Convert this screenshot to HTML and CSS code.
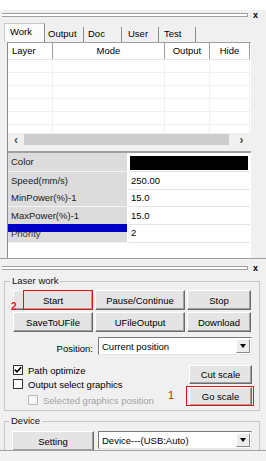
FILE: index.html
```html
<!DOCTYPE html>
<html lang="en">
  <head>
    <meta charset="UTF-8" />
    <meta name="viewport" content="width=device-width, initial-scale=1.0" />
    <title>Laser work panel</title>
    <link rel="stylesheet" href="styles.css">
  </head>
  <body>
    <div class="app">
      <div class="toppad"></div>
      <div class="grip">
        <span class="grip-lines"></span>
        <span class="grip-close">x</span>
      </div>

      <div class="tabs">
        <div class="tab tab-work active">Work</div>
        <div class="tab tab-output">Output</div>
        <div class="tab tab-doc">Doc</div>
        <div class="tab tab-user">User</div>
        <div class="tab tab-test">Test</div>
      </div>

      <div class="page">
        <div class="list-head">
          <div class="hcell hcell-left">Layer</div>
          <div class="hcell">Mode</div>
          <div class="hcell">Output</div>
          <div class="hcell">Hide</div>
        </div>
        <div class="list-body">
          <div class="lrow"><span></span><span></span><span></span><span></span></div>
          <div class="lrow"><span></span><span></span><span></span><span></span></div>
          <div class="lrow"><span></span><span></span><span></span><span></span></div>
          <div class="lrow"><span></span><span></span><span></span><span></span></div>
          <div class="lrow"><span></span><span></span><span></span><span></span></div>
          <div class="lrow"><span></span><span></span><span></span><span></span></div>
        </div>
        <div class="hscroll">
          <span class="sarrow">&lsaquo;</span>
          <span class="thumb"></span>
          <span class="sarrow sarrow-right">&rsaquo;</span>
        </div>

        <div class="gap"></div>

        <div class="props">
          <div class="prop">
            <div class="pname">Color</div>
            <div class="psep"></div>
            <div class="pval"><span class="swatch"></span></div>
          </div>
          <div class="prop">
            <div class="pname">Speed(mm/s)</div>
            <div class="psep"></div>
            <div class="pval">250.00</div>
          </div>
          <div class="prop">
            <div class="pname">MinPower(%)-1</div>
            <div class="psep"></div>
            <div class="pval">15.0</div>
          </div>
          <div class="prop">
            <div class="pname">MaxPower(%)-1</div>
            <div class="psep"></div>
            <div class="pval">15.0</div>
          </div>
          <div class="prop">
            <div class="pname pname-sel">Priority</div>
            <div class="psep"></div>
            <div class="pval">2</div>
          </div>
        </div>
      </div>

      <div class="divider"></div>

      <div class="grip grip-low">
        <span class="grip-lines"></span>
        <span class="grip-close">x</span>
      </div>

      <fieldset class="group laser">
        <legend>Laser work</legend>
        <div class="btn-grid">
          <button class="btn">Start</button>
          <button class="btn">Pause/Continue</button>
          <button class="btn">Stop</button>
          <button class="btn">SaveToUFile</button>
          <button class="btn">UFileOutput</button>
          <button class="btn">Download</button>
        </div>

        <div class="pos-row">
          <span class="pos-label">Position:</span>
          <div class="select">
            <span class="select-text">Current position</span>
            <span class="select-arrow"><i></i></span>
          </div>
        </div>

        <div class="lower">
          <div class="checks">
            <label class="check">
              <span class="box">
                <svg width="8" height="8" viewBox="0 0 8 8"><polyline points="0.8,3.6 3,5.9 7.2,1.2" fill="none" stroke="#000" stroke-width="1.6"/></svg>
              </span>
              Path optimize
            </label>
            <label class="check">
              <span class="box"></span>
              Output select graphics
            </label>
            <label class="check check-off">
              <span class="box"></span>
              Selected graphics position
            </label>
          </div>
          <div class="scale-btns">
            <button class="btn">Cut scale</button>
            <button class="btn">Go scale</button>
          </div>
        </div>
      </fieldset>

      <fieldset class="group device">
        <legend>Device</legend>
        <div class="dev-row">
          <button class="btn btn-setting">Setting</button>
          <div class="select">
            <span class="select-text">Device---(USB:Auto)</span>
            <span class="select-arrow"><i></i></span>
          </div>
        </div>
      </fieldset>

      <div class="statusbar"></div>

      <!-- red annotation marks drawn over the panel -->
      <span class="mark mark-start"></span>
      <span class="mark-num mark-num-2">2</span>
      <span class="mark mark-go"></span>
      <span class="mark-num mark-num-1">1</span>
    </div>
  </body>
</html>
```

FILE: styles.css
```css
body {
  margin: 0;
  background: #f0f0f0;
  font-family: "Liberation Sans", Arial, sans-serif;
  font-size: 9.5px;
  color: #000;
}
.app {
  position: relative;
  width: 266px;
  height: 461px;
  overflow: hidden;
  background: #f0f0f0;
}
.toppad {
  height: 10px;
  background: #fff;
}
.grip {
  display: flex;
  align-items: flex-start;
  height: 13px;
  padding-left: 2px;
}
.grip-lines {
  margin-top: 3px;
  width: 245px;
  height: 2px;
  border: 1px solid #a0a0a0;
  border-left: none;
  background: #fff;
}
.grip-close {
  margin-left: 5px;
  margin-top: 1px;
  font-weight: bold;
  font-size: 9px;
  line-height: 9px;
}
.grip-low {
  height: 16px;
}
.grip-low .grip-lines {
  margin-top: 7px;
}
.grip-low .grip-close {
  margin-top: 5px;
}

/* tabs */
.tabs {
  display: flex;
  align-items: flex-end;
  height: 19px;
  padding-left: 4px;
}
.tab {
  box-sizing: border-box;
  height: 15px;
  line-height: 14px;
  padding-left: 3px;
  border-right: 1px solid #8c8c8c;
}
.tab-work {
  width: 41px;
}
.tab-output {
  width: 39px;
}
.tab-doc {
  width: 38px;
  padding-left: 4px;
}
.tab-user {
  width: 37px;
  padding-left: 6px;
}
.tab-test {
  width: 37px;
  padding-left: 5px;
}
.tab.active {
  height: 19px;
  line-height: 16px;
  padding-left: 5px;
  background: #fbfbfb;
  border: 1px solid #c8c8c8;
  border-right-color: #8c8c8c;
  border-bottom: none;
}

/* tab page */
.page {
  width: 243px;
  margin-left: 7px;
  border-top: 1px solid #a0a0a0;
  border-left: 1px solid #8c8c8c;
}
.list-head {
  display: grid;
  grid-template-columns: 45px 112px 45px 40px;
  height: 17px;
  box-sizing: border-box;
  background: #fff;
  border-bottom: 1px solid #e6e6e6;
}
.hcell {
  box-sizing: border-box;
  line-height: 16px;
  text-align: center;
  border-right: 1px solid #a0a0a0;
}
.hcell-left {
  text-align: left;
  padding-left: 4px;
}
.list-body {
  height: 73px;
  overflow: hidden;
  background: #fff;
}
.lrow {
  display: grid;
  grid-template-columns: 45px 112px 45px 40px;
  height: 13px;
  box-sizing: border-box;
  border-bottom: 1px solid #f0f0f0;
}
.lrow span {
  border-right: 1px solid #f0f0f0;
}
.hscroll {
  display: flex;
  align-items: center;
  height: 13px;
  background: #f0f0f0;
}
.sarrow {
  width: 16px;
  text-align: center;
  font-weight: bold;
  font-size: 12px;
  line-height: 12px;
  color: #505050;
}
.sarrow-right {
  margin-left: auto;
  width: 19px;
}
.thumb {
  width: 205px;
  height: 11px;
  background: #cdcdcd;
}
.gap {
  height: 5px;
}

/* property grid */
.props {
  height: 105px;
  border-top: 2px solid #a0a0a0;
  background: #fff;
}
.prop {
  display: grid;
  grid-template-columns: 119px 2px 121px;
  height: 18px;
}
.prop:nth-child(2),
.prop:nth-child(4) {
  height: 17px;
}
.prop:first-child {
  height: 19px;
}
.pname,
.pval {
  box-sizing: border-box;
  line-height: 17px;
  border-bottom: 1px solid #f4f4f4;
}
.pname {
  padding-left: 3px;
  background: #dcdcdc;
  color: #1a1a1a;
}
.pname-sel {
  padding-top: 1px;
  background: linear-gradient(#0000c8 0 8px, #dcdcdc 8px);
  color: #333;
}
.pval {
  padding-left: 2px;
  border-bottom-color: #e4e4e4;
}
.swatch {
  display: block;
  width: 118px;
  height: 14px;
  margin: 3px 0 0 -1px;
  background: #000;
}
.divider {
  border-top: 1px solid #a0a0a0;
}

/* group boxes */
.group {
  box-sizing: border-box;
  width: 256px;
  margin: 0 0 0 4px;
  border: 1px solid #c6c6c6;
  padding: 3px 7px 3px 8px;
}
.group legend {
  margin-left: -3px;
  padding: 0 2px;
  line-height: 12px;
  color: #111;
}
.btn {
  box-sizing: border-box;
  height: 20px;
  padding: 0;
  font-family: inherit;
  font-size: 9.5px;
  color: #000;
  background: #e4e4e4;
  border: 1px solid;
  border-color: #fff #6a6a6a #6a6a6a #fff;
  box-shadow: inset -1px -1px 0 #a0a0a0;
}
.btn-grid {
  display: grid;
  grid-template-columns: 80px 90px 64px;
  column-gap: 2px;
  row-gap: 2px;
}
.pos-row {
  display: flex;
  align-items: center;
  margin-top: 5px;
}
.pos-label {
  width: 80px;
  text-align: right;
  margin-right: 5px;
  padding-top: 4px;
}
.select {
  box-sizing: border-box;
  display: flex;
  align-items: center;
  width: 154px;
  height: 18px;
  background: #fff;
  border: 1px solid;
  border-color: #7a7a7a #e6e6e6 #e6e6e6 #7a7a7a;
}
.select-text {
  flex: 1;
  padding-left: 3px;
}
.select-arrow {
  box-sizing: border-box;
  display: flex;
  align-items: center;
  justify-content: center;
  width: 14px;
  height: 14px;
  margin-right: 1px;
  background: #ececec;
  border: 1px solid;
  border-color: #fff #8a8a8a #8a8a8a #fff;
}
.select-arrow i {
  width: 0;
  height: 0;
  border-left: 3px solid transparent;
  border-right: 3px solid transparent;
  border-top: 4px solid #000;
}
.lower {
  display: flex;
  justify-content: space-between;
  margin-top: 8px;
}
.check {
  display: flex;
  align-items: center;
  height: 14px;
}
.check + .check-off {
  margin-top: 2px;
  padding-left: 15px;
  color: #a3a3a3;
}
.box {
  box-sizing: border-box;
  display: flex;
  align-items: center;
  justify-content: center;
  width: 10px;
  height: 10px;
  margin-right: 5px;
  background: #fff;
  border: 1px solid #333;
}
.check-off .box {
  border-color: #bcbcbc;
  background: #f4f4f4;
}
.scale-btns {
  display: flex;
  flex-direction: column;
  gap: 3px;
  width: 63px;
  margin-top: 2px;
}
.scale-btns .btn {
  height: 19px;
}
.device {
  height: 35px;
  margin-top: 4px;
  padding: 4px 7px 0 7px;
  border-bottom: none;
  overflow: hidden;
}
.dev-row {
  display: flex;
  gap: 4px;
}
.btn-setting {
  width: 82px;
  flex: none;
}
.statusbar {
  height: 11px;
  box-sizing: border-box;
  border-top: 1px solid #a0a0a0;
  background: #f2f2f2;
}

/* annotations */
.mark {
  position: absolute;
  box-sizing: border-box;
  border: 1px solid #e81010;
}
.mark-start {
  left: 23px;
  top: 290px;
  width: 70px;
  height: 20px;
}
.mark-go {
  left: 186px;
  top: 386px;
  width: 68px;
  height: 20px;
}
.mark-num {
  position: absolute;
  color: #e81010;
  font-size: 10px;
  line-height: 10px;
}
.mark-num-2 {
  left: 11px;
  top: 302px;
  font-weight: bold;
}
.mark-num-1 {
  left: 168px;
  top: 390px;
  font-size: 11px;
}
```
